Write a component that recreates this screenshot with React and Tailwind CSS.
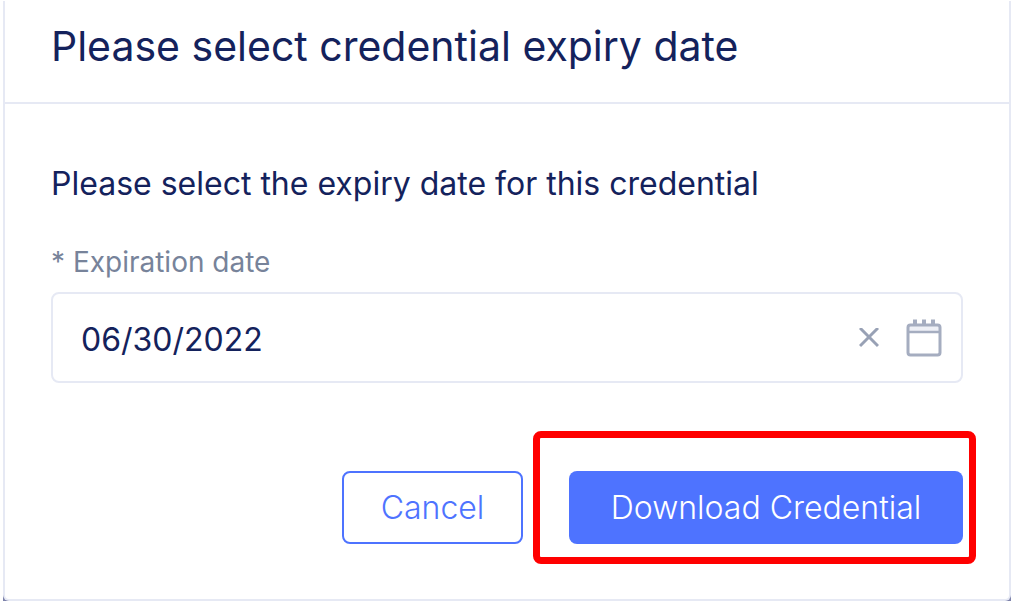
import { useState } from "react";

function CloseIcon() {
  return (
    <svg width="20" height="20" viewBox="0 0 20 20" fill="none" stroke="#98a1b5" strokeWidth="3" aria-hidden="true">
      <path d="M1 0 19 18M19 0 1 18" />
    </svg>
  );
}

function CalendarIcon() {
  return (
    <svg width="36" height="38" viewBox="0 0 36 38" fill="none" stroke="#a5adc0" strokeWidth="3" aria-hidden="true">
      <rect x="3" y="7" width="30" height="5" fill="#eef0f6" stroke="none" />
      <rect x="2" y="6" width="32" height="30" rx="2.5" />
      <path d="M2 13H34" strokeWidth="2.5" />
      <path d="M9 0.5V5M18 0.5V5M27 0.5V5" strokeWidth="4" />
    </svg>
  );
}

export default function App() {
  const [date, setDate] = useState("06/30/2022");

  return (
    <main className="bg-white pt-px pr-px pl-[3px] font-['Inter',sans-serif] text-[#14225c]">
      <div className="bg-[#7d82aa]">
        <section
          role="dialog"
          aria-labelledby="dialog-title"
          className="rounded-b-md border-x-2 border-b-2 border-[#e6e9f4] bg-white"
        >
          <header className="border-b-2 border-[#e6e9f4] px-[46px] pt-[21px] pb-8">
            <h1 id="dialog-title" className="text-[41px] leading-[48px]">
              Please select credential expiry date
            </h1>
          </header>

          <form className="px-[46px] pt-[60px] pb-[55px]" onSubmit={(e) => e.preventDefault()}>
            <p className="text-[32px] leading-10">Please select the expiry date for this credential</p>

            <label htmlFor="expiration" className="mt-10 block text-[28px] leading-9 text-[#77839a]">
              * Expiration date
            </label>
            <div className="mt-3 flex h-[91px] items-center rounded-lg border-2 border-[#e6e9f4] pr-[19px] pl-7">
              <input
                id="expiration"
                type="text"
                value={date}
                onChange={(e) => setDate(e.target.value)}
                className="min-w-0 flex-1 bg-transparent pt-1 text-[32px] leading-10 outline-none"
              />
              <button type="button" aria-label="Clear date" onClick={() => setDate("")}>
                <CloseIcon />
              </button>
              <button type="button" aria-label="Open calendar" className="ml-[27px]">
                <CalendarIcon />
              </button>
            </div>

            <div className="mt-[88px] flex justify-end gap-[46px]">
              <button
                type="button"
                className="h-[73px] w-[181px] rounded-lg border-2 border-[#4e73ff] text-[32px] leading-10 font-light text-[#4e73ff]"
              >
                Cancel
              </button>
              <div className="relative">
                <button
                  type="submit"
                  className="h-[73px] w-[394px] rounded-lg bg-[#4e73ff] text-[32px] leading-10 font-light text-white"
                >
                  Download Credential
                </button>
                <span className="pointer-events-none absolute -top-10 -right-[13px] -bottom-5 -left-9 rounded-lg border-7 border-[#ff0000]" />
              </div>
            </div>
          </form>
        </section>
      </div>
    </main>
  );
}
